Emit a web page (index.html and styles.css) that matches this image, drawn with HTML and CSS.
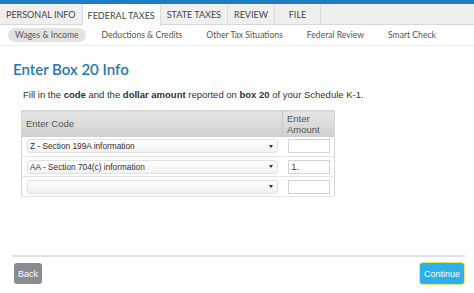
FILE: index.html
```html
<!DOCTYPE html>
<html lang="en">
<head>
    <meta charset="UTF-8">
    <title>Enter Box 20 Info</title>
    <link rel="stylesheet" href="styles.css">
</head>
<body>
    <div class="topbar"></div>
    <div class="tabs">
        <a class="tab">PERSONAL INFO</a>
        <a class="tab active">FEDERAL TAXES</a>
        <a class="tab">STATE TAXES</a>
        <a class="tab">REVIEW</a>
        <a class="tab wide">FILE</a>
    </div>
    <div class="subnav">
        <a class="sub current">Wages &amp; Income</a>
        <a class="sub">Deductions &amp; Credits</a>
        <a class="sub">Other Tax Situations</a>
        <a class="sub">Federal Review</a>
        <a class="sub">Smart Check</a>
    </div>

    <div class="content">
        <h1>Enter Box 20 Info</h1>
        <p class="intro">Fill in the <b>code</b> and the <b>dollar amount</b> reported on <b>box 20</b> of your Schedule K-1.</p>

        <table class="grid">
            <thead>
                <tr>
                    <th class="code-col">Enter Code</th>
                    <th class="amt-col">Enter<br>Amount</th>
                </tr>
            </thead>
            <tbody>
                <tr>
                    <td><div class="select"><span>Z - Section 199A information</span><i class="caret"></i></div></td>
                    <td><div class="amount"></div></td>
                </tr>
                <tr>
                    <td><div class="select"><span>AA - Section 704(c) information</span><i class="caret"></i></div></td>
                    <td><div class="amount">1.</div></td>
                </tr>
                <tr>
                    <td><div class="select"><span></span><i class="caret"></i></div></td>
                    <td><div class="amount"></div></td>
                </tr>
            </tbody>
        </table>
    </div>

    <div class="footer">
        <button class="btn back">Back</button>
        <button class="btn continue">Continue</button>
    </div>
</body>
</html>
```

FILE: styles.css
```css
* { margin: 0; padding: 0; box-sizing: border-box; }
body {
    font-family: Lato, "Open Sans", sans-serif;
    background: #fff;
    width: 474px;
    height: 293px;
    overflow: hidden;
}
.topbar { height: 4px; background: #1d7dc3; }

.tabs {
    display: flex;
    height: 21px;
    background: #efefef;
    border-bottom: 1px solid #d8d8d8;
}
.tab {
    display: flex;
    align-items: center;
    justify-content: center;
    padding: 0 6px;
    font-size: 9px;
    color: #444;
    white-space: nowrap;
    border-right: 1px solid #dadada;
}
.tab.active { background: #fff; height: 22px; padding: 0 5px; }
.tab.wide { width: 46px; }

.subnav {
    display: flex;
    align-items: center;
    height: 21px;
    padding-left: 8px;
    border-bottom: 1px solid #eee;
}
.sub {
    font-size: 8.6px;
    color: #555;
    white-space: nowrap;
    padding: 2px 8px;
    margin-right: 8px;
}
.sub.current {
    background: #e3e3e3;
    border-radius: 9px;
    padding: 2px 7px;
}

.content { padding: 14px 0 0 13px; }
h1 {
    font-size: 15px;
    font-weight: 600;
    color: #2677b6;
}
.intro {
    margin: 11px 0 0 10px;
    font-family: "Liberation Sans", Arial, sans-serif;
    font-size: 9.5px;
    color: #333;
}

.grid {
    margin: 10px 0 0 8px;
    border-collapse: collapse;
    border: 1px solid #d6d6d6;
    font-family: "Liberation Sans", Arial, sans-serif;
}
.grid th {
    background: linear-gradient(#e6e6e6, #cfcfcf);
    font-weight: normal;
    font-size: 9.5px;
    color: #555;
    text-align: left;
    vertical-align: middle;
    height: 26px;
    padding: 0 4px;
    line-height: 11px;
}
.code-col { width: 261px; border-right: 1px solid #c8c8c8; }
.amt-col { width: 52px; }
.grid td { height: 20px; padding: 0 5px; border-bottom: 1px solid #e4e4e4; }
.grid td:last-child { padding: 0 4px 0 5px; }

.select {
    display: flex;
    align-items: center;
    height: 14px;
    border: 1px solid #e2e2e2;
    border-radius: 3px;
    background: linear-gradient(#fff, #f1f1f1);
    padding: 0 4px 0 2px;
    font-size: 8.3px;
    color: #333;
}
.select span { flex: 1; }
.caret {
    width: 0; height: 0;
    border-left: 2px solid transparent;
    border-right: 2px solid transparent;
    border-top: 3px solid #333;
}
.amount {
    height: 14px;
    border: 1px solid #d4d4d4;
    font-size: 8.5px;
    color: #333;
    padding: 1px 3px;
    background: #fff;
}

.footer {
    margin: 58px 9px 0 12px;
    border-top: 2px solid #e2e2e2;
    padding-top: 6px;
    display: flex;
    justify-content: space-between;
}
.btn {
    font-family: "Liberation Sans", Arial, sans-serif;
    font-size: 9px;
    color: #fff;
    border: none;
    border-radius: 3px;
    height: 21px;
}
.back { background: #8a8c91; width: 28px; margin-left: 2px; }
.continue {
    background: #2cb0e8;
    width: 44px;
    box-shadow: 0 0 0 1px #e6e77a;
    margin-right: 1px;
}
```
